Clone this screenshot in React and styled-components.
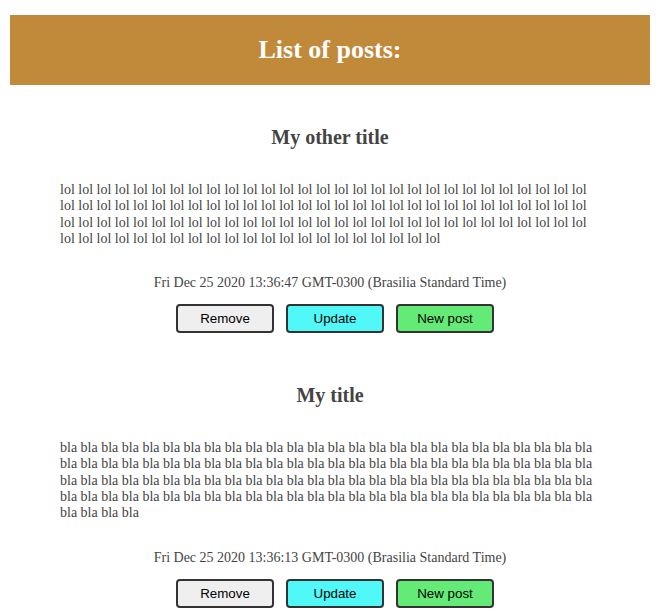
import React from 'react';
import styled, { createGlobalStyle } from 'styled-components';

const GlobalStyle = createGlobalStyle`
  body {
    margin: 0;
    background: #fff;
    font-family: "Liberation Serif", "Times New Roman", serif;
  }
`;

const posts = [
  {
    id: 2,
    title: 'My other title',
    body: Array(108).fill('lol').join(' '),
    date: 'Fri Dec 25 2020 13:36:47 GMT-0300 (Brasilia Standard Time)',
  },
  {
    id: 1,
    title: 'My title',
    body: Array(108).fill('bla').join(' '),
    date: 'Fri Dec 25 2020 13:36:13 GMT-0300 (Brasilia Standard Time)',
  },
];

const App = () => {
  return (
    <Page>
      <GlobalStyle />
      <Header>
        <h1>List of posts:</h1>
      </Header>
      <List>
        {posts.map((post) => (
          <Post key={post.id}>
            <Title>{post.title}</Title>
            <Body>{post.body}</Body>
            <DateLine>{post.date}</DateLine>
            <Actions>
              <Button>Remove</Button>
              <Button $bg="#50f9f8">Update</Button>
              <Button $bg="#64ea76">New post</Button>
            </Actions>
          </Post>
        ))}
      </List>
    </Page>
  );
};

const Page = styled.div`
  width: 640px;
  padding: 15px 14px 0 10px;
`;

const Header = styled.header`
  background-color: #c1893a;
  height: 70px;
  display: flex;
  align-items: center;
  justify-content: center;
  h1 {
    margin: 0;
    color: #fff;
    font-size: 26px;
    font-weight: 700;
  }
`;

const List = styled.main`
  display: flex;
  flex-direction: column;
  gap: 48px;
  padding-top: 38px;
`;

const Post = styled.article`
  display: flex;
  flex-direction: column;
  align-items: center;
  padding: 0 50px;
  color: #444;
`;

const Title = styled.h2`
  margin: 0;
  font-size: 20px;
  line-height: 28px;
`;

const Body = styled.p`
  margin: 31px 0 0;
  font-size: 14px;
  line-height: 16.3px;
  align-self: stretch;
`;

const DateLine = styled.p`
  margin: 28px 0 0;
  font-size: 14px;
  line-height: 16px;
`;

const Actions = styled.div`
  display: flex;
  gap: 12px;
  margin: 13px 0 0 10px;
`;

const Button = styled.button`
  width: 98px;
  height: 29px;
  background: ${({ $bg }) => $bg || '#efefef'};
  border: 2px solid #333;
  border-radius: 4px;
  font-family: "Liberation Sans", Arial, sans-serif;
  font-size: 13.33px;
  color: #000;
  padding: 0;
  cursor: pointer;
`;

export default App;
